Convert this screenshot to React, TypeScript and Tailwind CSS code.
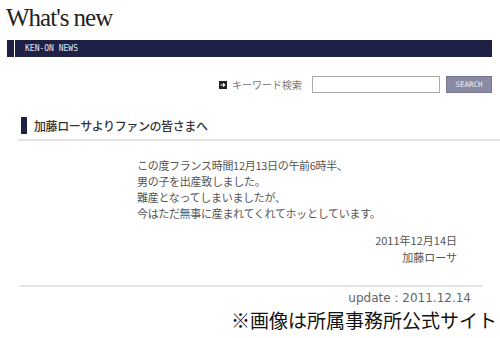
import React from "react";

const jp = { fontFamily: '"Noto Sans CJK JP", "Noto Sans", sans-serif' };

export default function App() {
  return (
    <div className="relative w-[500px] h-[338px] overflow-hidden bg-white">
      {/* Title */}
      <div
        className="pl-[6px] pt-[2px] h-[40px] text-[25px] leading-[32px] tracking-[-1px] text-[#222]"
        style={{ fontFamily: '"Liberation Serif", serif' }}
      >
        What's new
      </div>
      {/* Bar */}
      <div className="ml-[7px] w-[485px] h-[17px] flex">
        <div className="w-[7px] bg-[#1e2046]" />
        <div className="w-[1px] bg-white" />
        <div className="flex-1 bg-[#1e2046] flex items-center pl-[10px]">
          <span
            className="text-[8px] leading-none text-[#e6e6ee] tracking-[0px]"
            style={{ fontFamily: '"DejaVu Sans Mono", monospace' }}
          >
            KEN-ON NEWS
          </span>
        </div>
      </div>
      {/* Search row */}
      <div className="mt-[19px] flex items-center justify-end pr-[8px] h-[17px]">
        <svg width="8" height="8" viewBox="0 0 8 8" className="mr-[5px]">
          <rect width="8" height="8" fill="#222" />
          <path d="M1.5 4 H5.5 M4 2.3 L5.8 4 L4 5.7" stroke="#fff" strokeWidth="1.1" fill="none" />
        </svg>
        <span className="text-[10px] leading-none text-[#777] mr-[10px]" style={jp}>
          キーワード検索
        </span>
        <div className="w-[128px] h-[17px] border border-[#aaa] bg-white mr-[6px]" />
        <div className="w-[46px] h-[17px] bg-[#8a8aa2] border border-[#77778f] flex items-center justify-center">
          <span
            className="text-[7.5px] leading-none text-[#eeeef4]"
            style={{ fontFamily: '"DejaVu Sans Mono", monospace' }}
          >
            SEARCH
          </span>
        </div>
      </div>
      {/* Heading */}
      <div className="mt-[24px] ml-[21px] flex items-center h-[17px]">
        <div className="w-[6px] h-[17px] bg-[#1e2046]" />
        <span className="ml-[7px] text-[12px] leading-none tracking-[-0.4px] text-[#333] font-medium" style={jp}>
          加藤ローサよりファンの皆さまへ
        </span>
      </div>
      <div className="mt-[5px] ml-[18px] h-[2px] bg-[#e2e2e2]" />
      {/* Body */}
      <div className="mt-[16px] pl-[137px] text-[11px] leading-[16px] text-[#555] tracking-[-0.3px]" style={jp}>
        <p>この度フランス時間12月13日の午前6時半、</p>
        <p>男の子を出産致しました。</p>
        <p>難産となってしまいましたが、</p>
        <p>今はただ無事に産まれてくれてホッとしています。</p>
      </div>
      <div className="mt-[11px] pr-[43px] flex flex-col items-end text-[11px] leading-[17px] text-[#555]" style={jp}>
        <p>2011年12月14日</p>
        <p>加藤ローサ</p>
      </div>
      <div className="mt-[19px] ml-[20px] w-[462px] h-[2px] bg-[#e2e2e2]" />
      <div
        className="mt-[3px] pr-[29px] text-right text-[12px] leading-[16px] text-[#666]"
        style={{ fontFamily: '"DejaVu Sans", sans-serif' }}
      >
        update : 2011.12.14
      </div>
      <div className="mt-[3px] pr-[3px] text-right text-[19px] leading-[22px] text-[#111]" style={jp}>
        ※画像は所属事務所公式サイト
      </div>
    </div>
  );
}
